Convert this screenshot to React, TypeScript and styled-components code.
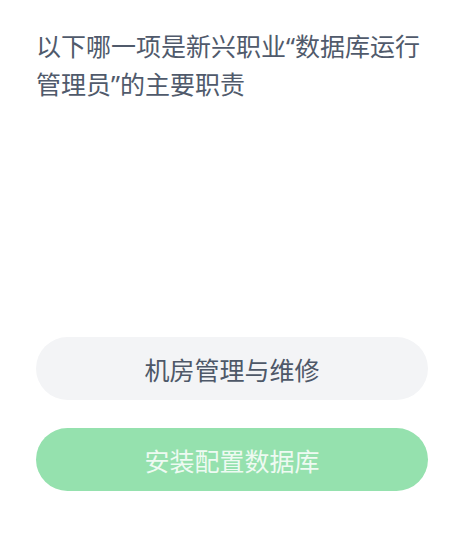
import styled, { createGlobalStyle } from "styled-components"

const GlobalStyle = createGlobalStyle`
    html, body {
        margin: 0;
        padding: 0;
        background: #ffffff;
    }
    body {
        font-family: "Noto Sans CJK SC", "Noto Sans", sans-serif;
    }
`

const Page = styled.div`
    width: 474px;
    min-height: 553px;
    box-sizing: border-box;
    padding: 26px 46px 0 36px;
    display: flex;
    flex-direction: column;
`

const Question = styled.h1`
    margin: 0;
    font-size: 25px;
    line-height: 38px;
    font-weight: 400;
    color: #505a6b;
`

// latin quote marks are narrow in the reference, not full width
const Quote = styled.span`
    font-family: "Noto Sans", sans-serif;
    line-height: 1;
`

const Options = styled.div`
    margin-top: 235px;
    display: flex;
    flex-direction: column;
    gap: 28px;
`

const Option = styled.button<{ $picked?: boolean }>`
    height: 63px;
    width: 392px;
    border: none;
    border-radius: 32px;
    font-family: "Noto Sans CJK SC", "Noto Sans", sans-serif;
    font-size: 25px;
    font-weight: 400;
    display: flex;
    align-items: center;
    justify-content: center;
    background: ${p => (p.$picked ? "#95e1ae" : "#f3f4f6")};
    color: ${p => (p.$picked ? "#eefaf2" : "#4e5868")};
`

const App = () => {
    return (
        <Page>
            <GlobalStyle />
            <Question>
                以下哪一项是新兴职业<Quote>“</Quote>数据库运行
                <br />
                管理员<Quote>”</Quote>的主要职责
            </Question>
            <Options>
                <Option>机房管理与维修</Option>
                <Option $picked>安装配置数据库</Option>
            </Options>
        </Page>
    )
}

export default App
